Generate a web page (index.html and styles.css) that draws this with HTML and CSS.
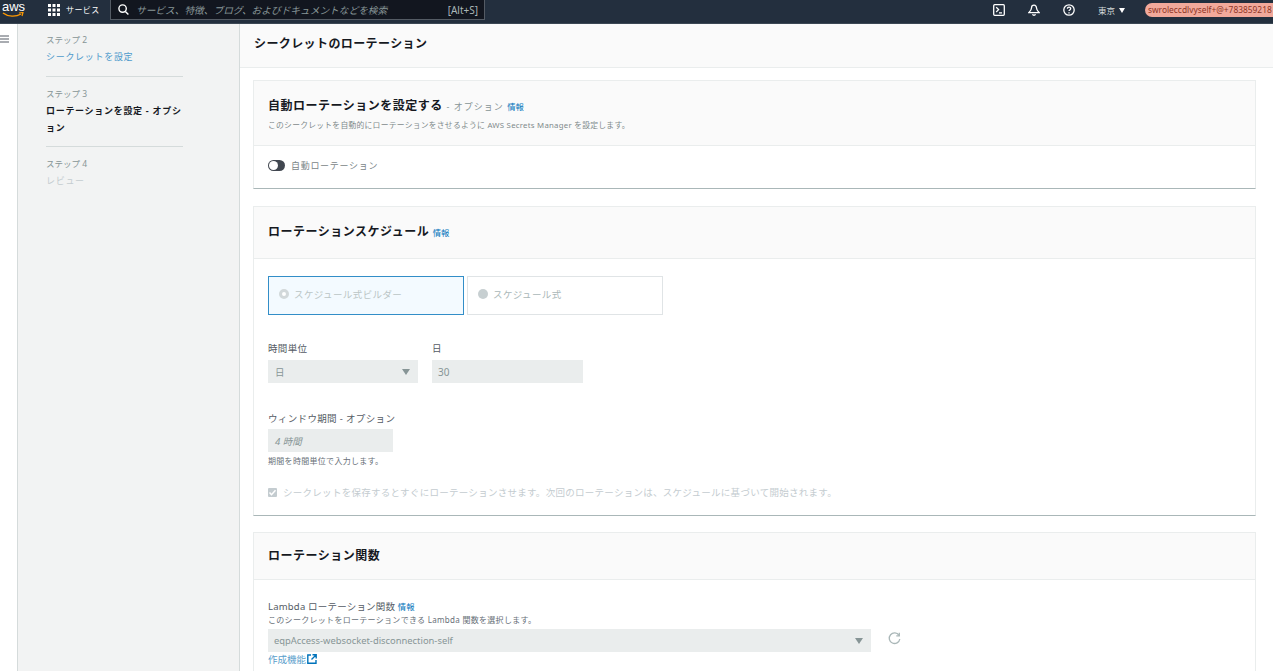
FILE: index.html
```html
<!DOCTYPE html>
<html lang="ja">
<head>
    <meta charset="utf-8">
    <title>シークレットのローテーション</title>
    <link rel="stylesheet" href="styles.css">
</head>
<body>
    <header class="topbar">
        <div class="logo">
            <span class="logo-text">aws</span>
            <svg class="logo-smile" width="22" height="6" viewBox="0 0 22 6"><path d="M1 1c5 4 13 4 18 1" fill="none" stroke="#f90" stroke-width="1.4"/><path d="M17 1l4-.5-1 3.5" fill="none" stroke="#f90" stroke-width="1.2"/></svg>
        </div>
        <div class="services">
            <svg width="12" height="12" viewBox="0 0 12 12" fill="#fff"><rect width="3" height="3"/><rect x="4.5" width="3" height="3"/><rect x="9" width="3" height="3"/><rect y="4.5" width="3" height="3"/><rect x="4.5" y="4.5" width="3" height="3"/><rect x="9" y="4.5" width="3" height="3"/><rect y="9" width="3" height="3"/><rect x="4.5" y="9" width="3" height="3"/><rect x="9" y="9" width="3" height="3"/></svg>
            <span>サービス</span>
        </div>
        <div class="search">
            <svg width="11" height="11" viewBox="0 0 11 11" fill="none" stroke="#fff" stroke-width="1.4"><circle cx="4.6" cy="4.6" r="3.7"/><path d="M7.4 7.4l3 3"/></svg>
            <span class="search-text">サービス、特徴、ブログ、およびドキュメントなどを検索</span>
            <span class="search-key">[Alt+S]</span>
        </div>
        <div class="top-right">
            <svg class="top-icon" width="12" height="12" viewBox="0 0 12 12" fill="none" stroke="#fff" stroke-width="1.3"><rect x=".7" y=".7" width="10.6" height="10.6" rx="1"/><path d="M3.2 3.2l2.4 2.4-2.4 2.4M6 8.8h3"/></svg>
            <svg class="top-icon" width="12" height="12" viewBox="0 0 12 12" fill="none" stroke="#fff" stroke-width="1.3"><path d="M6 1.2C4.300 1.200 3.500 2.500 3.500 4c0 1.800-1.300 3.300-2.700 4.700h10.400C9.800 7.300 8.500 5.800 8.500 4 8.500 2.500 7.700 1.200 6 1.200z"/><path d="M4.500 10.200a1.600 1.600 0 0 0 3 0"/></svg>
            <svg class="top-icon" width="12" height="12" viewBox="0 0 12 12" fill="none" stroke="#fff" stroke-width="1.3"><circle cx="6" cy="6" r="5.200"/><path d="M4.400 4.700c0-2.100 3.300-2.100 3.300-.1 0 1.300-1.700 1.300-1.700 2.500"/><path d="M6 8.200v1.200"/></svg>
            <span class="region">東京 <i class="caret"></i></span>
            <span class="account">swroleccdlvyself+@+783859218</span>
        </div>
    </header>

    <div class="layout">
        <div class="rail">
            <svg width="9" height="8" viewBox="0 0 9 8" fill="none" stroke="#545b64" stroke-width="1.100"><path d="M0 1h9M0 4h9M0 7h9"/></svg>
        </div>
        <nav class="steps">
            <div class="step">
                <small>ステップ 2</small>
                <a class="step-link">シークレットを設定</a>
            </div>
            <div class="step">
                <small>ステップ 3</small>
                <b class="step-now">ローテーションを設定 - オプション</b>
            </div>
            <div class="step">
                <small>ステップ 4</small>
                <span class="step-off">レビュー</span>
            </div>
        </nav>
        <main class="main">
            <div class="page-head">シークレットのローテーション</div>

            <section class="card card-first">
                <div class="card-head card-head-tall">
                    <h2>自動ローテーションを設定する <span class="opt">- オプション</span> <a class="info">情報</a></h2>
                    <p>このシークレットを自動的にローテーションをさせるように AWS Secrets Manager を設定します。</p>
                </div>
                <div class="toggle-row">
                    <span class="toggle"></span>
                    <span>自動ローテーション</span>
                </div>
            </section>

            <section class="card">
                <div class="card-head">
                    <h2>ローテーションスケジュール <a class="info">情報</a></h2>
                </div>
                <div class="card-body">
                    <div class="tiles">
                        <div class="tile tile-on"><i class="radio radio-on"></i>スケジュール式ビルダー</div>
                        <div class="tile"><i class="radio"></i>スケジュール式</div>
                    </div>
                    <div class="field-row">
                        <div class="field">
                            <label>時間単位</label>
                            <div class="input input-unit">日<i class="arrow"></i></div>
                        </div>
                        <div class="field">
                            <label>日</label>
                            <div class="input input-days">30</div>
                        </div>
                    </div>
                    <div class="field field-window">
                        <label>ウィンドウ期間 - オプション</label>
                        <div class="input input-window">4 時間</div>
                        <p class="hint">期間を時間単位で入力します。</p>
                    </div>
                    <div class="check-row">
                        <span class="check"><svg width="9" height="9" viewBox="0 0 9 9" fill="none" stroke="#fff" stroke-width="1.500"><path d="M1.500 4.500l2 2.200 4-4.500"/></svg></span>
                        シークレットを保存するとすぐにローテーションさせます。次回のローテーションは、スケジュールに基づいて開始されます。
                    </div>
                </div>
            </section>

            <section class="card card-last">
                <div class="card-head card-head-short">
                    <h2>ローテーション関数</h2>
                </div>
                <div class="card-body card-body-lambda">
                    <label class="lambda-label">Lambda ローテーション関数 <a class="info">情報</a></label>
                    <p class="hint hint-lambda">このシークレットをローテーションできる Lambda 関数を選択します。</p>
                    <div class="lambda-row">
                        <div class="input input-lambda">eqpAccess-websocket-disconnection-self<i class="arrow"></i></div>
                        <svg width="13" height="13" viewBox="0 0 13 13" fill="none" stroke="#aab7b8" stroke-width="1.300"><path d="M11 3.300A5.300 5.300 0 1 0 11.800 7"/><path d="M11.300.8v3h-3"/></svg>
                    </div>
                    <a class="create">作成機能<svg width="10" height="10" viewBox="0 0 10 10" fill="none" stroke="#0073bb" stroke-width="1.400"><path d="M4 1H.8v8.200H9V6M5.500.8h3.700v3.700M9 1L4.500 5.500"/></svg></a>
                </div>
            </section>
        </main>
    </div>
</body>
</html>
```

FILE: styles.css
```css
html,
body {
    height: 671px;
    margin: 0;
    overflow: hidden;
}
body {
    font-family: "Noto Sans", "Noto Sans CJK JP", sans-serif;
    font-size: 10px;
    color: #16191f;
    background: #fff;
}
a {
    color: #0073bb;
}
h2,
p {
    margin: 0;
    font-weight: normal;
}

/* top bar */
.topbar {
    display: flex;
    align-items: flex-start;
    height: 24px;
    overflow: hidden;
    background: #232f3e;
    color: #fff;
    border-bottom: 1px solid #3b4754;
    box-sizing: border-box;
}
.logo {
    position: relative;
    width: 22px;
    height: 20px;
    margin-left: 2px;
}
.logo-text {
    display: block;
    font-family: "Liberation Sans", sans-serif;
    font-size: 13px;
    line-height: 13px;
}
.logo-smile {
    position: absolute;
    top: 12px;
    left: 0;
}
.services {
    display: flex;
    align-items: center;
    gap: 6px;
    margin-left: 24px;
    height: 19px;
    width: 62px;
    font-size: 8px;
    letter-spacing: .4px;
}
.search {
    display: flex;
    align-items: center;
    box-sizing: border-box;
    width: 375px;
    height: 20px;
    padding: 0 6px 0 7px;
    background: #12161f;
    border: 1px solid #545b64;
    border-top: 0;
}
.search-text {
    margin-left: 7px;
    flex: 1;
    font-size: 9.700px;
    font-style: italic;
    color: #879596;
    white-space: nowrap;
}
.search-key {
    font-size: 10px;
    color: #aab7b8;
}
.top-right {
    display: flex;
    align-items: center;
    height: 20px;
    margin-left: auto;
    white-space: nowrap;
}
.top-icon {
    margin-right: 23px;
}
.region {
    width: 47px;
    font-size: 8.500px;
    color: #d5dbdb;
}
.caret {
    display: inline-block;
    margin-left: 2px;
    border: 3.500px solid transparent;
    border-top: 5px solid #fff;
    border-bottom: 0;
    vertical-align: 1px;
}
.account {
    width: 128px;
    height: 14px;
    overflow: hidden;
    padding-left: 3px;
    box-sizing: border-box;
    background: #f2a99b;
    border-radius: 7px 0 0 7px;
    color: #8f3525;
    font-size: 8.400px;
    line-height: 14px;
}

/* layout */
.layout {
    display: flex;
    height: 647px;
}
.rail {
    width: 18px;
    padding-top: 11px;
    box-sizing: border-box;
    border-right: 1px solid #d5dbdb;
    flex: none;
}
.rail svg {
    display: block;
}
.steps {
    width: 222px;
    flex: none;
    box-sizing: border-box;
    padding: 10px 56px 0 28px;
    background: #f2f3f3;
    border-right: 1px solid #d5dbdb;
}
.step {
    padding-bottom: 11px;
    margin-bottom: 11px;
    border-bottom: 1px solid #d5dbdb;
}
.step:last-child {
    border-bottom: 0;
}
.step small {
    display: block;
    font-size: 8.500px;
    line-height: 12px;
    margin-bottom: 2px;
    color: #879596;
}
.step-link,
.step-now,
.step-off {
    display: block;
    font-size: 9px;
    line-height: 17px;
    letter-spacing: .7px;
}
.step-link {
    color: #0073bb;
    opacity: .7;
}
.step-now {
    font-weight: 700;
    margin-bottom: -1px;
}
.step-off {
    color: #c4ccd0;
}
.main {
    flex: 1;
    min-width: 0;
    overflow: hidden;
}
.page-head {
    height: 44px;
    box-sizing: border-box;
    padding: 0 14px;
    font-size: 12px;
    font-weight: 700;
    letter-spacing: .4px;
    line-height: 39px;
    background: #fafafa;
    border-bottom: 1px solid #eaeded;
}

/* cards */
.card {
    margin: 17px 17px 0 13px;
    background: #fff;
    border: 1px solid #eaeded;
    border-bottom: 1px solid #aab7b8;
}
.card-first {
    margin-top: 12px;
}
.card-last {
    margin-top: 16px;
}
.card-head {
    height: 52px;
    box-sizing: border-box;
    padding: 0 14px;
    background: #fafafa;
    border-bottom: 1px solid #eaeded;
    line-height: 50px;
}
.card-head-tall {
    height: 65px;
    padding-top: 15px;
    line-height: normal;
}
.card-head-short {
    height: 47px;
    line-height: 46px;
}
h2 {
    display: inline;
    font-size: 12px;
    font-weight: 700;
    letter-spacing: .5px;
}
.opt {
    font-size: 9px;
    font-weight: 400;
    color: #879596;
    letter-spacing: 1px;
}
.info {
    font-size: 8.300px;
    font-weight: 400;
    letter-spacing: 0;
}
.card-head-tall p {
    margin-top: 5px;
    font-size: 7.800px;
    color: #7f8a8c;
    letter-spacing: .25px;
}
.toggle-row {
    display: flex;
    align-items: center;
    gap: 6px;
    height: 42px;
    box-sizing: border-box;
    padding: 0 14px 3px;
    font-size: 9px;
    color: #7b8688;
    letter-spacing: .7px;
}
.toggle {
    position: relative;
    width: 17px;
    height: 11px;
    border-radius: 6px;
    background: #414750;
}
.toggle::before {
    content: "";
    position: absolute;
    top: 1px;
    left: 1px;
    width: 9px;
    height: 9px;
    border-radius: 50%;
    background: #fff;
}
.card-body {
    height: 256px;
    box-sizing: border-box;
    padding: 17px 14px 0;
}
.tiles {
    display: flex;
    gap: 3px;
}
.tile {
    display: flex;
    align-items: center;
    gap: 5px;
    width: 196px;
    height: 39px;
    box-sizing: border-box;
    padding: 0 0 3px 10px;
    border: 1px solid #e0e4e6;
    font-size: 9.500px;
    color: #aab7b8;
    letter-spacing: .4px;
}
.tile-on {
    background: #f1faff;
    border-color: #0073bb;
    opacity: .8;
}
.radio {
    width: 10px;
    height: 10px;
    box-sizing: border-box;
    border-radius: 50%;
    background: #c7cfd1;
}
.radio-on {
    background: #fff;
    border: 3px solid #c7cfd1;
}
.field-row {
    display: flex;
    gap: 14px;
    margin-top: 27px;
}
.field label,
.lambda-label {
    display: block;
    font-size: 9.500px;
    line-height: 14px;
    color: #545b64;
    letter-spacing: .35px;
}
.input {
    position: relative;
    display: flex;
    align-items: center;
    height: 23px;
    margin-top: 4px;
    box-sizing: border-box;
    padding-left: 7px;
    background: #eaeded;
    font-size: 9.500px;
    color: #879596;
}
.input-unit {
    width: 150px;
}
.input-days {
    width: 151px;
    padding-left: 6px;
    font-size: 10px;
}
.arrow {
    position: absolute;
    right: 8px;
    top: 9px;
    border: 4px solid transparent;
    border-top: 6px solid #879596;
    border-bottom: 0;
}
.field-window {
    margin-top: 29px;
}
.input-window {
    width: 125px;
    margin-top: 3px;
    font-style: italic;
}
.hint {
    margin-top: 3px;
    font-size: 8px;
    color: #687078;
    letter-spacing: .3px;
}
.check-row {
    display: flex;
    align-items: center;
    gap: 6px;
    margin-top: 19px;
    font-size: 9.500px;
    color: #c4ccd0;
    letter-spacing: .28px;
    white-space: nowrap;
}
.check {
    display: flex;
    align-items: center;
    justify-content: center;
    width: 9px;
    height: 9px;
    background: #c4ccd0;
    border-radius: 1px;
}
.card-body-lambda {
    padding-top: 20px;
}
.lambda-label {
    letter-spacing: .2px;
}
.hint-lambda {
    margin-top: 0;
}
.lambda-row {
    display: flex;
    align-items: center;
    gap: 17px;
}
.input-lambda {
    width: 603px;
    font-size: 9.400px;
    padding-left: 6px;
}
.create {
    display: flex;
    align-items: center;
    gap: 1px;
    font-size: 9.500px;
    color: #5a9ecb;
}
```
